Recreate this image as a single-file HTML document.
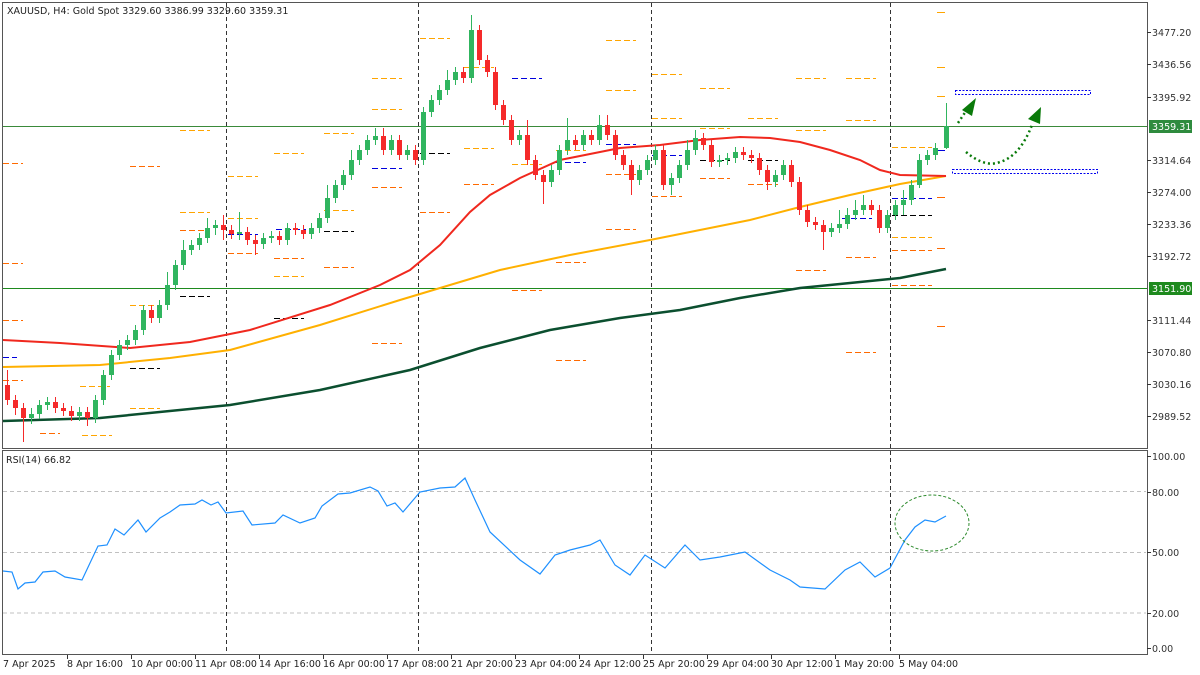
<!DOCTYPE html>
<html><head><meta charset="utf-8"><style>
html,body{margin:0;padding:0;background:#fff;width:1200px;height:675px;overflow:hidden}
svg{display:block;font-family:"DejaVu Sans","Liberation Sans",sans-serif;font-size:9.5px}
</style></head><body>
<svg width="1200" height="675" xmlns="http://www.w3.org/2000/svg">
<rect width="1200" height="675" fill="#fff"/>
<g stroke="#c0c0c0" stroke-dasharray="4,3">
<line x1="3" x2="1146" y1="491.5" y2="491.5"/><line x1="3" x2="1146" y1="552.5" y2="552.5"/><line x1="3" x2="1146" y1="613" y2="613"/>
</g>
<g stroke="#333" stroke-dasharray="4,3">
<line x1="226.5" x2="226.5" y1="3" y2="654"/><line x1="418.5" x2="418.5" y1="3" y2="654"/><line x1="651.5" x2="651.5" y1="3" y2="654"/><line x1="890.5" x2="890.5" y1="3" y2="654"/>
</g>
<line x1="3" x2="1147" y1="126.5" y2="126.5" stroke="#3a8a3a"/>
<line x1="3" x2="1147" y1="288.5" y2="288.5" stroke="#1e8a1e"/>
<g stroke-dasharray="6,3" stroke-width="1">
<g stroke="#ffa500">
<path d="M180,130.5h30M228,218.5h30M372,78.5h30M372,109.5h30M420,38.5h30M464,67.5h30M606,40.5h30M606,90.5h30M652,74.5h30M700,88.5h30M796,78.5h30M846,78.5h30M892,147.5h40M892,237.5h40M180,212.5h30M130,305.5h30M228,176.5h30M274,153.5h30M324,133.5h30M324,210.5h30M464,148.5h30M512,164.5h30M556,150.5h30M652,118.5h30M700,128.5h30M748,118.5h30M796,130.5h30M846,120.5h30M130,408.5h30M80,386.5h30M82,435.5h30M274,276.5h30"/>
</g>
<g stroke="#ff6a00">
<path d="M228,253.5h30M274,258.5h30M324,267.5h30M372,187.5h30M420,212.5h30M464,184.5h30M512,290.5h30M556,262.5h30M606,174.5h30M652,196.5h30M700,178.5h30M748,184.5h30M796,270.5h30M846,257.5h30M892,285.5h40M892,250.5h40M180,230.5h30M130,368.5h30M372,343.5h30M556,360.5h30M606,229.5h30M846,352.5h30M3,163.5h20M3,263.5h20M3,320.5h20M3,380.5h20M40,433.5h20M130,166.5h30"/>
</g>
<g stroke="#0000dd">
<path d="M512,78.5h30M556,162.5h30M372,168.5h30M228,234.5h30M276,229.5h30M606,144.5h30M652,155.5h30M842,218.5h30M892,198.5h40M3,357.5h14"/>
</g>
<g stroke="#000">
<path d="M180,296.5h30M324,231.5h30M420,153.5h30M130,368.5h30M700,160.5h30M748,160.5h30M274,318.5h30M892,215.5h40"/>
</g>
</g>
<g stroke="#ffa500"><path d="M937,12.5h8M937,67.5h8M937,96.5h8"/></g>
<g stroke="#0000dd"><path d="M937,150.5h8"/></g>
<g stroke="#ff6a00"><path d="M937,197.5h8M937,248.5h8M937,326.5h8"/></g>
<polyline fill="none" stroke="#0b4f2f" stroke-width="2.5" points="3,421 100,418 230,405 320,390 410,370 480,348 550,330 620,318 680,310 740,298 800,288 850,283 900,278 946,269"/>
<polyline fill="none" stroke="#ffb000" stroke-width="2" points="3,367 100,365 170,358 230,350 320,325 400,300 460,282 500,270 570,255 650,240 700,230 750,220 800,207 850,195 900,184 946,176"/>
<polyline fill="none" stroke="#f0281e" stroke-width="2" points="3,340 60,343 130,348 190,342 250,330 330,305 380,285 410,270 440,245 470,212 490,195 520,178 560,160 620,148 660,145 700,140 740,137 770,138 800,142 830,150 860,160 880,170 900,175 946,176"/>
<g stroke="#30b55f" stroke-width="1" fill="none">
<path d="M31.5,408V424M39.5,400V419M47.5,397V410M79.5,407V421M95.5,395V423M103.5,370V405M111.5,350V380M119.5,340V360M127.5,335V350M135.5,325V345M143.5,305V335M159.5,300V323M167.5,272V310M175.5,260V290M183.5,240V270M191.5,240V255M199.5,233V250M207.5,218V243M215.5,220V235M239.5,212V240M263.5,233V249M271.5,231V243M287.5,223V245M311.5,223V239M319.5,213V233M327.5,185V223M335.5,180V203M343.5,170V190M351.5,150V180M359.5,145V165M367.5,135V155M375.5,128V145M391.5,135V155M407.5,145V160M423.5,107V165M431.5,95V117M439.5,85V105M447.5,70V95M455.5,67V85M471.5,15V83M519.5,130V145M551.5,165V187M559.5,145V175M567.5,118V155M583.5,130V150M599.5,115V145M639.5,165V185M647.5,155V175M655.5,145V165M671.5,173V195M679.5,160V183M687.5,140V170M695.5,130V155M719.5,155V167M727.5,153V165M735.5,147V163M775.5,170V187M783.5,160V180M831.5,223V237M839.5,210V233M847.5,208V229M855.5,200V220M863.5,195V215M887.5,210V233M895.5,200V220M903.5,190V215M911.5,180V205M919.5,154V188M927.5,150V165M935.5,143V160M946.5,103V149"/>
</g>
<g stroke="#f52a2a" stroke-width="1" fill="none">
<path d="M7.5,370V405M15.5,395V415M23.5,403V442M55.5,397V413M63.5,403V416M71.5,406V421M87.5,407V426M151.5,305V323M223.5,215V240M231.5,225V239M247.5,227V245M255.5,235V255M279.5,231V245M295.5,223V235M303.5,225V239M383.5,128V155M399.5,135V160M415.5,145V165M463.5,67V83M479.5,25V65M487.5,55V77M495.5,67V110M503.5,100V125M511.5,115V145M527.5,120V165M535.5,155V180M543.5,170V204M575.5,135V150M591.5,130V145M607.5,115V140M615.5,130V160M623.5,150V170M631.5,160V195M663.5,145V190M703.5,133V150M711.5,140V167M743.5,147V160M751.5,150V163M759.5,153V175M767.5,165V190M791.5,160V187M799.5,177V215M807.5,205V227M815.5,217V230M823.5,220V250M871.5,200V215M879.5,205V233"/>
</g>
<g stroke="#30b55f" stroke-width="5" fill="none">
<path d="M31.5,418V414M39.5,414V405M47.5,405V402M79.5,416V412M95.5,418V400M103.5,400V375M111.5,375V355M119.5,355V345M127.5,345V340M135.5,340V330M143.5,330V310M159.5,318V305M167.5,305V285M175.5,285V265M183.5,265V250M191.5,250V245M199.5,245V238M207.5,238V228M215.5,228V225M239.5,234V232M263.5,244V238M271.5,238V236M287.5,240V228M311.5,234V228M319.5,228V218M327.5,218V198M335.5,198V185M343.5,185V175M351.5,175V160M359.5,160V150M367.5,150V140M375.5,140V136M391.5,150V140M407.5,155V150M423.5,160V112M431.5,112V100M439.5,100V90M447.5,90V80M455.5,80V72M471.5,78V30M519.5,140V135M551.5,182V170M559.5,170V150M567.5,150V140M583.5,145V135M599.5,140V125M639.5,180V170M647.5,170V160M655.5,160V150M671.5,185V178M679.5,178V165M687.5,165V150M695.5,150V138M719.5,162V160M727.5,160V158M735.5,158V152M775.5,182V175M783.5,175V165M831.5,232V228M839.5,228V224M847.5,224V215M855.5,215V210M863.5,210V205M887.5,228V215M895.5,215V205M903.5,205V200M911.5,200V185M919.5,185V160M927.5,160V155M935.5,155V148M946.5,148V126"/>
</g>
<g stroke="#f52a2a" stroke-width="5" fill="none">
<path d="M7.5,385V400M15.5,400V408M23.5,408V418M55.5,402V408M63.5,408V411M71.5,411V416M87.5,412V418M151.5,310V318M223.5,225V230M231.5,230V234M247.5,232V240M255.5,240V244M279.5,236V240M295.5,228V230M303.5,230V234M383.5,136V150M399.5,140V155M415.5,150V160M463.5,72V78M479.5,30V60M487.5,60V72M495.5,72V105M503.5,105V120M511.5,120V140M527.5,135V160M535.5,160V175M543.5,175V182M575.5,140V145M591.5,135V140M607.5,125V135M615.5,135V155M623.5,155V165M631.5,165V180M663.5,150V185M703.5,138V145M711.5,145V162M743.5,152V155M751.5,155V158M759.5,158V170M767.5,170V182M791.5,165V182M799.5,182V210M807.5,210V222M815.5,222V225M823.5,225V232M871.5,205V210M879.5,210V228"/>
</g>
<polyline fill="none" stroke="#1e90ff" stroke-width="1.2" points="3,571 12,572 18,589 25,583 35,582 43,572 55,571 65,577 82,580 98,546 107,545 115,529 124,535 138,520 146,532 160,518 170,512 180,505 195,504 202,500 211,505 218,502 226,513 243,511 252,525 275,523 283,515 300,523 315,518 322,506 338,494 350,493 370,487 378,491 387,506 395,503 403,512 420,492 440,488 455,487 465,478 475,500 490,532 520,560 540,574 555,555 570,550 590,545 600,540 615,565 630,575 645,555 665,568 685,545 700,560 720,557 745,552 770,570 790,580 800,587 825,589 845,570 860,562 875,577 890,568 905,540 915,527 925,520 935,522 946,516"/>
<ellipse cx="932" cy="523" rx="37" ry="28" fill="none" stroke="#2e8b2e" stroke-dasharray="3,2"/>
<rect x="955.5" y="90.5" width="135" height="4" fill="none" stroke="#0000ee" stroke-dasharray="2,1.5"/>
<rect x="952.5" y="169.5" width="145" height="4" fill="none" stroke="#0000ee" stroke-dasharray="2,1.5"/>
<path d="M958,123 L968,108" stroke="#0a7a0a" stroke-width="2.5" stroke-dasharray="2,3" fill="none"/>
<path d="M976,98 L962,110 L972,116 Z" fill="#0a7a0a"/>
<path d="M966,152 Q985,168 1000,162 Q1020,156 1032,125" stroke="#0a7a0a" stroke-width="2.5" stroke-dasharray="2,3" fill="none"/>
<path d="M1041,107 L1028,119 L1040,124 Z" fill="#0a7a0a"/>
<rect x="2.5" y="2.5" width="1145" height="446" fill="none" stroke="#555"/>
<rect x="2.5" y="450.5" width="1145" height="204" fill="none" stroke="#555"/>
<text x="7" y="14" fill="#222">XAUUSD, H4:  Gold Spot  3329.60 3386.99 3329.60 3359.31</text>
<text x="6" y="463" fill="#222">RSI(14) 66.82</text>
<g stroke="#333"><path d="M1147,32.5h4M1147,64.5h4M1147,97.5h4M1147,160.5h4M1147,192.5h4M1147,224.5h4M1147,256.5h4M1147,320.5h4M1147,352.5h4M1147,384.5h4M1147,416.5h4M1147,456.5h4M1147,492.5h4M1147,552.5h4M1147,613.5h4M1147,648.5h4"/></g>
<g fill="#333">
<text x="1152" y="36">3477.20</text><text x="1152" y="68">3436.56</text><text x="1152" y="101">3395.92</text>
<text x="1152" y="164">3314.64</text><text x="1152" y="196">3274.00</text><text x="1152" y="228">3233.36</text>
<text x="1152" y="260">3192.72</text><text x="1152" y="324">3111.44</text><text x="1152" y="356">3070.80</text>
<text x="1152" y="388">3030.16</text><text x="1152" y="420">2989.52</text>
<text x="1152" y="460">100.00</text><text x="1152" y="496">80.00</text><text x="1152" y="556">50.00</text>
<text x="1152" y="617">20.00</text><text x="1152" y="652">0.00</text>
</g>
<rect x="1149" y="120" width="43" height="13" fill="#2e8b3e"/><text x="1152" y="130" fill="#fff">3359.31</text>
<rect x="1149" y="282" width="43" height="13" fill="#1e8a1e"/><text x="1152" y="292" fill="#fff">3151.90</text>
<g stroke="#333"><path d="M67.5,655v4M131.5,655v4M195.5,655v4M259.5,655v4M323.5,655v4M387.5,655v4M451.5,655v4M515.5,655v4M579.5,655v4M643.5,655v4M707.5,655v4M771.5,655v4M835.5,655v4M899.5,655v4"/></g>
<g fill="#222">
<text x="3" y="667">7 Apr 2025</text><text x="67" y="667">8 Apr 16:00</text><text x="131" y="667">10 Apr 00:00</text>
<text x="195" y="667">11 Apr 08:00</text><text x="259" y="667">14 Apr 16:00</text><text x="323" y="667">16 Apr 00:00</text>
<text x="387" y="667">17 Apr 08:00</text><text x="451" y="667">21 Apr 20:00</text><text x="515" y="667">23 Apr 04:00</text>
<text x="579" y="667">24 Apr 12:00</text><text x="643" y="667">25 Apr 20:00</text><text x="707" y="667">29 Apr 04:00</text>
<text x="771" y="667">30 Apr 12:00</text><text x="835" y="667">1 May 20:00</text><text x="899" y="667">5 May 04:00</text>
</g>
</svg>
</body></html>
